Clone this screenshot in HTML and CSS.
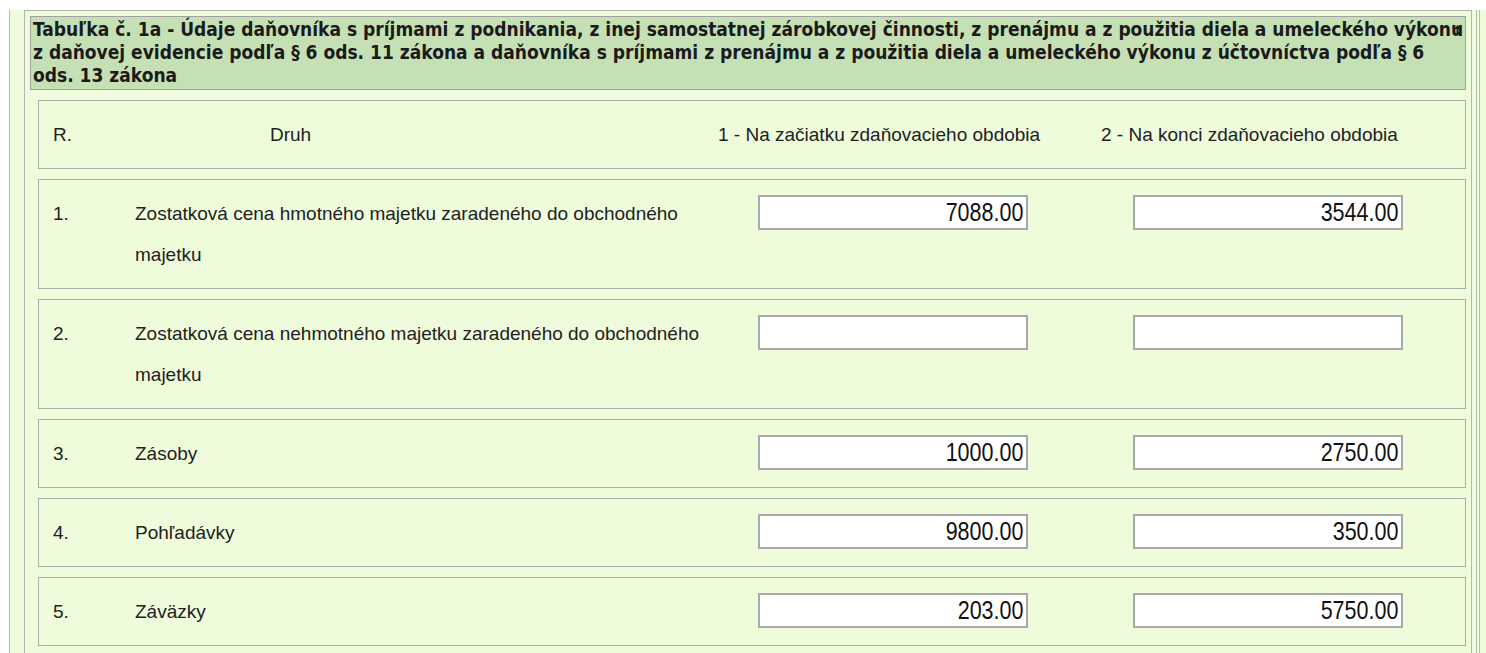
FILE: index.html
```html
<!DOCTYPE html>
<html lang="sk">
<head>
<meta charset="utf-8">
<title>Tabuľka č. 1a</title>
<link rel="stylesheet" href="styles.css">
</head>
<body>
<div class="page">
  <div class="fieldset">
    <div class="title">Tabuľka č. 1a - Údaje daňovníka s príjmami z podnikania, z inej samostatnej zárobkovej činnosti, z prenájmu a z použitia diela a umeleckého výkonu<br>z daňovej evidencie podľa § 6 ods. 11 zákona a daňovníka s príjmami z prenájmu a z použitia diela a umeleckého výkonu z účtovníctva podľa § 6<br>ods. 13 zákona<svg class="arrow" width="9" height="11" viewBox="0 0 9 11"><path d="M4.5 1 L8 5 L5.5 5 L5.5 10 L3.5 10 L3.5 5 L1 5 Z" fill="#1b1b1b"/></svg></div>

    <div class="box head-row">
      <div class="c-r">R.</div>
      <div class="c-druh">Druh</div>
      <div class="c-h">1 - Na začiatku zdaňovacieho obdobia</div>
      <div class="c-h">2 - Na konci zdaňovacieho obdobia</div>
    </div>

    <div class="box row">
      <div class="c-r">1.</div>
      <div class="c-name">Zostatková cena hmotného majetku zaradeného do obchodného majetku</div>
      <div class="num" role="textbox"><span>7088.00</span></div>
      <div class="num num2" role="textbox"><span>3544.00</span></div>
    </div>

    <div class="box row">
      <div class="c-r">2.</div>
      <div class="c-name">Zostatková cena nehmotného majetku zaradeného do obchodného majetku</div>
      <div class="num" role="textbox"><span></span></div>
      <div class="num num2" role="textbox"><span></span></div>
    </div>

    <div class="box row">
      <div class="c-r">3.</div>
      <div class="c-name">Zásoby</div>
      <div class="num" role="textbox"><span>1000.00</span></div>
      <div class="num num2" role="textbox"><span>2750.00</span></div>
    </div>

    <div class="box row">
      <div class="c-r">4.</div>
      <div class="c-name">Pohľadávky</div>
      <div class="num" role="textbox"><span>9800.00</span></div>
      <div class="num num2" role="textbox"><span>350.00</span></div>
    </div>

    <div class="box row">
      <div class="c-r">5.</div>
      <div class="c-name">Záväzky</div>
      <div class="num" role="textbox"><span>203.00</span></div>
      <div class="num num2" role="textbox"><span>5750.00</span></div>
    </div>
  </div>
  <div class="track"></div>
</div>
</body>
</html>
```

FILE: styles.css
```css
html, body {
  margin: 0;
  padding: 0;
  background: #ffffff;
}

body {
  padding: 10px 0 0 9px;
  font-family: "Liberation Sans", Arial, sans-serif;
  color: #222222;
  overflow: hidden;
  height: 643px;
}

.page {
  display: flex;
  align-items: stretch;
  height: 100%;
  background: #eefcdc;
  border-left: 1px solid #b8b8b8;
  padding-left: 14px;
}

.fieldset {
  flex: 1;
  min-width: 0;
  border: 1px solid #b4b4b4;
  border-bottom: none;
  padding: 5px 5px 0 5px;
  display: flex;
  flex-direction: column;
  gap: 10px;
  overflow: hidden;
}

.track {
  width: 2px;
  margin: 0 6px 0 4px;
  border-left: 1px solid #b8b8b8;
  border-right: 1px solid #b8b8b8;
}

.title {
  position: relative;
  flex: none;
  background: #c6e0b5;
  border: 1px solid #a2a2a2;
  padding: 1px 1px 2px 2px;
  font-family: "DejaVu Sans Condensed", "DejaVu Sans", sans-serif;
  font-weight: bold;
  font-size: 19px;
  line-height: 23px;
  color: #1b1b1b;
  white-space: nowrap;
  overflow: hidden;
}

.arrow {
  position: absolute;
  right: 3px;
  top: 7px;
}

.box {
  flex: none;
  margin-left: 8px;
  border: 1px solid #acacac;
  padding: 13px 14px;
  font-size: 19px;
  line-height: 41px;
  color: #222222;
}

.head-row {
  display: grid;
  grid-template-columns: 82px 583px 383px 1fr;
}

.head-row .c-druh {
  padding-left: 135px;
}

.row {
  display: grid;
  grid-template-columns: 82px 623px 270px 105px 270px;
  align-items: start;
}

.c-name {
  padding-right: 20px;
}

.num {
  grid-column: 3;
  box-sizing: border-box;
  width: 270px;
  height: 35px;
  margin-top: 2px;
  padding: 0 3px 0 4px;
  border: 2px solid #a9a9a9;
  background: #ffffff;
  display: flex;
  justify-content: flex-end;
  align-items: center;
  overflow: hidden;
}

.num span {
  display: block;
  font-family: "Liberation Sans", Arial, sans-serif;
  font-size: 25px;
  line-height: 31px;
  color: #111111;
  transform: scaleX(0.86);
  transform-origin: right center;
}

.num2 {
  grid-column: 5;
}
```
